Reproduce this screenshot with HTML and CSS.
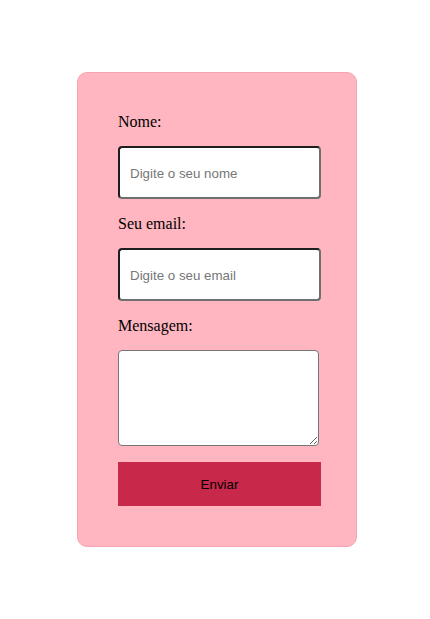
FILE: index.html
```html
<!DOCTYPE html>
<html lang="pt">
<head>
<meta charset="utf-8">
<title>Contato</title>
<link rel="stylesheet" href="styles.css">
</head>
<body>
<form class="card">
  <label class="label" for="nome">Nome:</label>
  <input class="field" id="nome" type="text" placeholder="Digite o seu nome">
  <label class="label" for="email">Seu email:</label>
  <input class="field" id="email" type="email" placeholder="Digite o seu email">
  <label class="label" for="msg">Mensagem:</label>
  <textarea class="area" id="msg"></textarea>
  <button class="btn" type="button">Enviar</button>
</form>
</body>
</html>
```
FILE: styles.css
```css
html, body {
  margin: 0;
  padding: 0;
  background: #ffffff;
}
body {
  padding-top: 72px;
  padding-left: 77px;
}
.card {
  box-sizing: border-box;
  width: 280px;
  height: 475px;
  padding: 40px;
  background: #ffb6c1;
  border: 1px solid #f7a4b2;
  border-radius: 10px;
  display: flex;
  flex-direction: column;
  align-items: flex-start;
}
.label {
  display: block;
  font-family: "Liberation Serif", "Times New Roman", serif;
  font-size: 16px;
  line-height: 18px;
  color: #000;
  margin-bottom: 15px;
}
.field {
  box-sizing: border-box;
  width: 203px;
  height: 53px;
  margin: 0 0 16px 0;
  padding: 1px 10px 0 10px;
  font-family: "Liberation Sans", Arial, sans-serif;
  font-size: 13.33px;
  color: #000;
  background: #fff;
  border-style: solid;
  border-width: 2px;
  border-color: #1e1e1e #6f6f6f #6f6f6f #1e1e1e;
  border-radius: 4px;
  outline: none;
}
.field::placeholder {
  color: #767676;
}
.area {
  box-sizing: border-box;
  display: block;
  width: 201px;
  height: 96px;
  margin: 0 0 16px 0;
  padding: 2px;
  background: #fff;
  border: 1px solid #767676;
  border-radius: 4px;
  font-family: "Liberation Mono", monospace;
  font-size: 13px;
}
.btn {
  box-sizing: border-box;
  width: 203px;
  height: 44px;
  margin: 0;
  padding: 0;
  border: none;
  background: #c8294b;
  color: #000;
  font-family: "Liberation Sans", Arial, sans-serif;
  font-size: 13.33px;
  cursor: pointer;
}
```
